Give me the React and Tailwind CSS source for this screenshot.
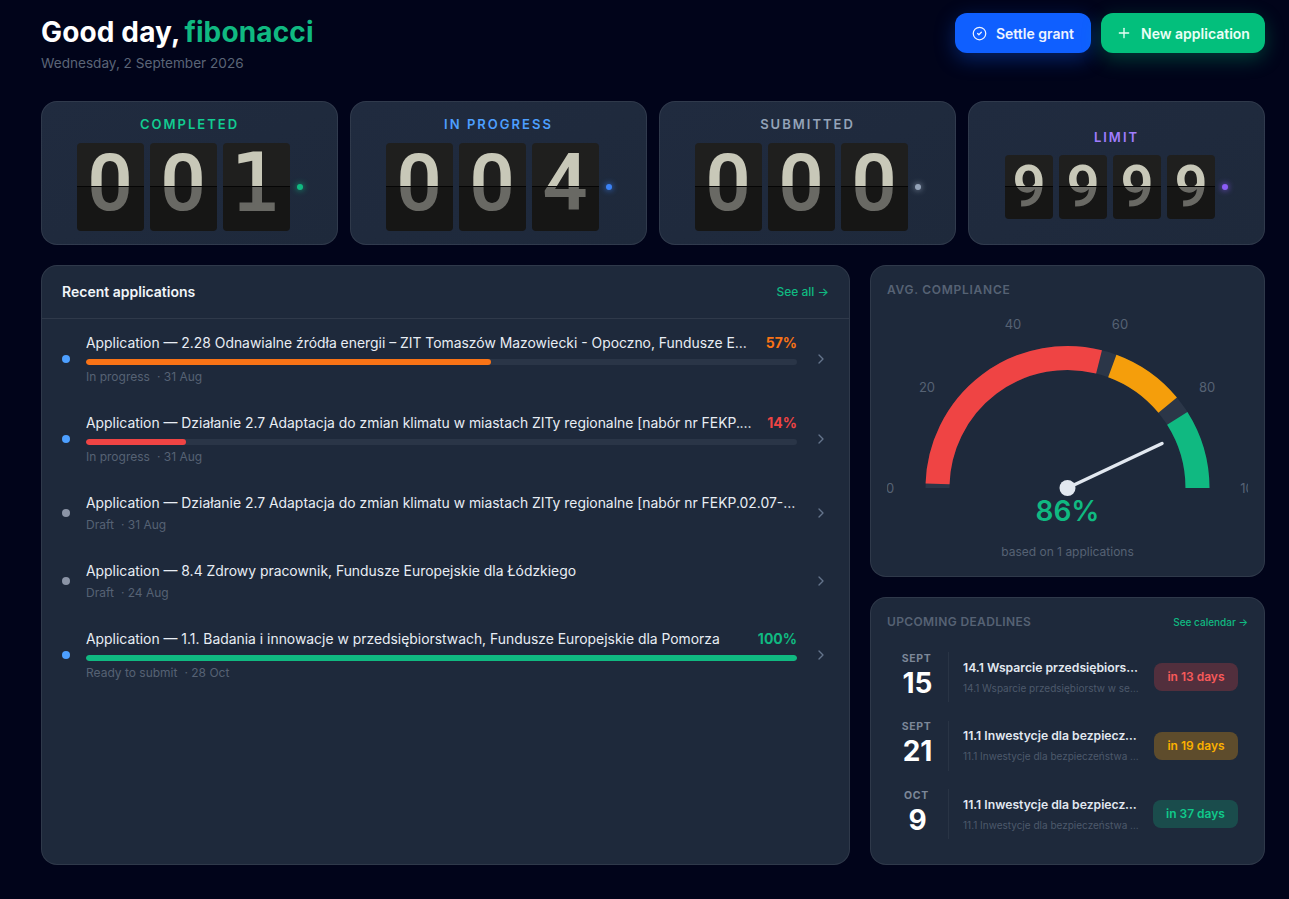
import React from "react";
import { ChevronRight, Plus, CircleCheck } from "lucide-react";

const FONT = { fontFamily: "Inter, 'Noto Sans', sans-serif" };

function Digit({ d, big }) {
  const size = big
    ? "w-[67px] h-[88px]"
    : "w-[48px] h-[64px]";
  const half = big ? "h-[44px]" : "h-[32px]";
  const face = d === "1"
    ? "font-['DejaVu_Sans'] font-normal [-webkit-text-stroke:2px_currentColor]"
    : "font-['Roboto'] font-semibold";
  const glyph = big
    ? "h-[88px] leading-[80px] text-[79px]"
    : "h-[64px] leading-[62px] text-[58px]";
  return (
    <div className={`${size} flex flex-col rounded-[4px] overflow-hidden`}>
      <div className={`${half} overflow-hidden bg-[#1f1f1e] border-b border-[#050505] text-[#c8c8b8]`}>
        <div className={`${glyph} ${face} text-center`}>{d}</div>
      </div>
      <div className={`${half} overflow-hidden bg-[#161615] text-[#696964]`}>
        <div className={`${glyph} ${face} text-center ${big ? "-mt-[44px]" : "-mt-[32px]"}`}>{d}</div>
      </div>
    </div>
  );
}

function Stat({ label, value, labelClass, dotClass, big = true }) {
  return (
    <div className={`flex-1 h-[144px] rounded-[16px] border border-white/[0.08] bg-gradient-to-br from-[#202b3f] to-[#1e293b] flex flex-col items-center justify-center ${big ? "" : "pt-[2px]"}`}>
      <div className={`text-[13px] leading-[16px] font-semibold tracking-[0.155em] ${labelClass} ${big ? "mb-[11px]" : "mb-[10px]"}`}>{label}</div>
      <div className="flex items-center gap-[6px]">
        {value.split("").map((d, i) => (
          <Digit key={i} d={d} big={big} />
        ))}
        <span className={`ml-[1px] w-[6px] h-[6px] rounded-full ${dotClass}`} />
      </div>
    </div>
  );
}

const apps = [
  { dot: "bg-[#4d9fff]", title: "Application — 2.28 Odnawialne źródła energii – ZIT Tomaszów Mazowiecki - Opoczno, Fundusze Europejskie dla Łódzkiego", pct: 57, bar: "bg-[#f97316]", pctc: "text-[#f97316]", status: "In progress", date: "31 Aug" },
  { dot: "bg-[#4d9fff]", title: "Application — Działanie 2.7 Adaptacja do zmian klimatu w miastach ZITy regionalne [nabór nr FEKP.02.07-IZ.00-001/25]", pct: 14, bar: "bg-[#ef4444]", pctc: "text-[#ef4444]", status: "In progress", date: "31 Aug" },
  { dot: "bg-[#8b94a6]", title: "Application — Działanie 2.7 Adaptacja do zmian klimatu w miastach ZITy regionalne [nabór nr FEKP.02.07-IZ.00-001/25]", status: "Draft", date: "31 Aug" },
  { dot: "bg-[#8b94a6]", title: "Application — 8.4 Zdrowy pracownik, Fundusze Europejskie dla Łódzkiego", status: "Draft", date: "24 Aug" },
  { dot: "bg-[#4d9fff]", title: "Application — 1.1. Badania i innowacje w przedsiębiorstwach, Fundusze Europejskie dla Pomorza", pct: 100, bar: "bg-[#10b981]", pctc: "text-[#10b981]", status: "Ready to submit", date: "28 Oct" },
];

function AppRow({ a }) {
  return (
    <div className="flex items-center gap-4 px-5 py-[14px]">
      <span className={`w-2 h-2 rounded-full shrink-0 ${a.dot}`} />
      <div className="flex-1 min-w-0">
        <div className="flex items-center justify-between gap-3">
          <div className="truncate text-[13.9px] leading-[20px] font-normal text-[#e8edf4]">{a.title}</div>
          {a.pct != null && <div className={`shrink-0 text-[14px] leading-[20px] font-bold ${a.pctc}`}>{a.pct}%</div>}
        </div>
        {a.pct != null && (
          <div className="mt-[6px] h-[6px] rounded-full bg-[#2a3547] overflow-hidden">
            <div className={`h-full rounded-full ${a.bar}`} style={{ width: `${a.pct}%` }} />
          </div>
        )}
        <div className="mt-1 text-[12px] leading-[16px] text-[#566274]">
          {a.status}<span className="ml-[7px]">· {a.date}</span>
        </div>
      </div>
      <ChevronRight className="w-4 h-4 shrink-0 text-[#64748b]" />
    </div>
  );
}

const CX = 180.5, CY = 178, R = 130;
function arc(from, to) {
  const p = (f) => {
    const a = Math.PI * (1 - f);
    return `${(CX + R * Math.cos(a)).toFixed(2)} ${(CY - R * Math.sin(a)).toFixed(2)}`;
  };
  return `M ${p(from)} A ${R} ${R} 0 0 1 ${p(to)}`;
}

function Gauge() {
  const labels = [
    ["0", 3, 178], ["20", 40, 77], ["40", 126, 14], ["60", 233, 14], ["80", 320, 77], ["100", 364, 178],
  ];
  return (
    <svg width="361" height="218" viewBox="0 0 361 218" className="block">
      <path d={arc(0, 1)} fill="none" stroke="#2b3648" strokeWidth="24" />
      <path d={arc(0.01, 0.578)} fill="none" stroke="#ef4444" strokeWidth="24" />
      <path d={arc(0.612, 0.78)} fill="none" stroke="#f59e0b" strokeWidth="24" />
      <path d={arc(0.82, 1)} fill="none" stroke="#10b981" strokeWidth="24" />
      {labels.map(([t, x, y]) => (
        <text key={t} x={x} y={y} textAnchor="middle" dominantBaseline="central" fontSize="13" fill="#566274" fontFamily="Inter, sans-serif">{t}</text>
      ))}
      <line x1={CX} y1={CY} x2={CX + 94.5} y2={CY - 44.5} stroke="#e2e8f0" strokeWidth="3.5" strokeLinecap="round" />
      <circle cx={CX} cy={CY} r="8" fill="#e2e8f0" />
      <text x={CX} y={200.5} textAnchor="middle" dominantBaseline="central" fontSize="28" fontWeight="600" fill="#10b981" fontFamily="Inter, sans-serif">86%</text>
    </svg>
  );
}

const deadlines = [
  { m: "SEPT", d: "15", t: "14.1 Wsparcie przedsiębiorstw w sektorach", s: "14.1 Wsparcie przedsiębiorstw w sektorach strategicznych", b: "in 13 days", c: "bg-[#ef4444]/25 text-[#f75a5a]", w: "w-[84px]" },
  { m: "SEPT", d: "21", t: "11.1 Inwestycje dla bezpieczeństwa państwa", s: "11.1 Inwestycje dla bezpieczeństwa państwa i regionu", b: "in 19 days", c: "bg-[#f59e0b]/30 text-[#fbb000]", w: "w-[84px]" },
  { m: "OCT", d: "9", t: "11.1 Inwestycje dla bezpieczeństwa państwa", s: "11.1 Inwestycje dla bezpieczeństwa państwa i regionu", b: "in 37 days", c: "bg-[#10b981]/25 text-[#10c98a]", w: "w-[85px]" },
];

function DeadlineRow({ x }) {
  return (
    <div className="flex items-center h-[68.5px] pr-[10px]">
      <div className="w-[62px] h-[50px] shrink-0 border-r border-white/5 flex flex-col items-center justify-center pb-[4px]">
        <div className="text-[10.5px] leading-[14px] font-bold tracking-[0.06em] text-[#7c8798] -ml-px pr-[1px]">{x.m}</div>
        <div className="text-[28px] leading-[32px] font-bold text-white mt-[1px]">{x.d}</div>
      </div>
      <div className="flex-1 min-w-0 pl-[14px] pr-[13px]">
        <div className="truncate text-[12.2px] leading-[16px] font-semibold text-[#e2e8f0]">{x.t}</div>
        <div className="truncate text-[10px] leading-[14px] mt-[5px] text-[#4d596b]">{x.s}</div>
      </div>
      <div className={`${x.w} h-[28px] shrink-0 rounded-[8px] flex items-center justify-center text-[12px] font-semibold ${x.c}`}>{x.b}</div>
    </div>
  );
}

export default function App() {
  return (
    <div style={FONT} className="w-[1289px] h-[899px] overflow-hidden bg-[#01041a] pl-[41px] pr-[24px] pt-[13px]">
      <div className="flex items-start justify-between h-[88px]">
        <div>
          <div className="text-[28px] leading-[38px] font-bold text-white tracking-[0.005em]">
            Good day, <span className="-ml-[2px] text-[#10b981]">fibonacci</span>
          </div>
          <div className="mt-[2px] text-[13.6px] leading-[20px] text-[#5b6577]">Wednesday, 2 September 2026</div>
        </div>
        <div className="flex gap-[10px]">
          <button className="w-[136px] h-[40px] rounded-[12px] bg-[#0f5fff] shadow-[0_6px_20px_rgba(15,95,255,0.35)] flex items-center justify-center gap-[9px] text-[14px] font-semibold text-[#eef3ff]">
            <CircleCheck className="w-[15px] h-[15px]" strokeWidth={2} />
            Settle grant
          </button>
          <button className="w-[164px] h-[40px] rounded-[12px] bg-[#03bf7c] shadow-[0_6px_20px_rgba(3,191,124,0.3)] flex items-center justify-center gap-[9px] text-[14px] font-semibold text-[#eafff6]">
            <Plus className="w-[16px] h-[16px]" strokeWidth={2} />
            New application
          </button>
        </div>
      </div>

      <div className="flex gap-[12px]">
        <Stat label="COMPLETED" value="001" labelClass="text-[#12cc90]" dotClass="bg-[#10b981] shadow-[0_0_6px_#10b981]" />
        <Stat label="IN PROGRESS" value="004" labelClass="text-[#4d9fff]" dotClass="bg-[#3b82f6] shadow-[0_0_6px_#3b82f6]" />
        <Stat label="SUBMITTED" value="000" labelClass="text-[#94a3b8]" dotClass="bg-[#94a3b8] shadow-[0_0_6px_#94a3b8]" />
        <Stat label="LIMIT" value="9999" labelClass="text-[#a07dff]" dotClass="bg-[#8b5cf6] shadow-[0_0_6px_#8b5cf6]" big={false} />
      </div>

      <div className="mt-[20px] flex gap-[20px]">
        <div className="w-[809px] h-[600px] rounded-[16px] border border-white/[0.08] bg-[#1e293b]">
          <div className="h-[53px] border-b border-white/[0.08] px-5 pb-[2px] flex items-center justify-between">
            <div className="text-[14px] font-semibold text-[#f1f5f9]">Recent applications</div>
            <div className="mt-[1px] text-[12px] font-medium text-[#10b981]">See all →</div>
          </div>
          {apps.map((a, i) => <AppRow key={i} a={a} />)}
        </div>

        <div className="w-[395px] flex flex-col gap-[20px]">
          <div className="h-[312px] rounded-[16px] border border-white/[0.08] bg-[#1e293b] px-4 pt-[16px]">
            <div className="text-[12px] leading-[16px] font-semibold tracking-[0.06em] text-[#566274]">AVG. COMPLIANCE</div>
            <div className="mt-[12px]"><Gauge /></div>
            <div className="mt-[16px] text-center text-[12px] leading-[16px] text-[#566274]">based on 1 applications</div>
          </div>
          <div className="h-[268px] rounded-[16px] border border-white/[0.08] bg-[#1e293b] px-4 pt-[15px]">
            <div className="flex items-center justify-between h-[18px]">
              <div className="text-[12px] font-semibold tracking-[0.03em] text-[#566274]">UPCOMING DEADLINES</div>
              <div className="text-[10px] font-medium text-[#10b981]">See calendar →</div>
            </div>
            <div className="mt-[12px]">
              {deadlines.map((x, i) => <DeadlineRow key={i} x={x} />)}
            </div>
          </div>
        </div>
      </div>
    </div>
  );
}
